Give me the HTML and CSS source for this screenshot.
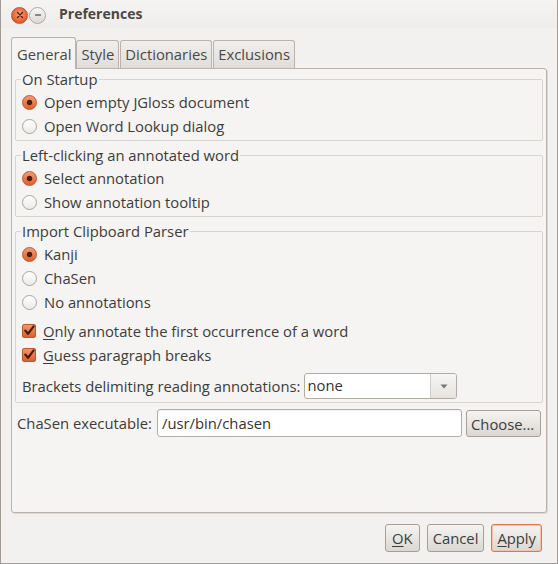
FILE: index.html
```html
<!DOCTYPE html>
<html>
<head>
<meta charset="utf-8">
<title>Preferences</title>
<link rel="stylesheet" href="styles.css">
</head>
<body>
<div class="window">
  <div class="titlebar">
    <span class="wbtn close"><svg width="8" height="8" viewBox="0 0 8 8"><path d="M1.5 1.5 L6.5 6.5 M6.5 1.5 L1.5 6.5" stroke="#5a2410" stroke-width="1.4" stroke-linecap="round"/></svg></span>
    <span class="wbtn min"><svg width="8" height="8" viewBox="0 0 8 8"><path d="M1.5 4 H6.5" stroke="#6a6662" stroke-width="1.3" stroke-linecap="round"/></svg></span>
    <span class="title">Preferences</span>
  </div>
  <div class="main">
    <div class="tabs">
      <div class="tab active">General</div>
      <div class="tab">Style</div>
      <div class="tab">Dictionaries</div>
      <div class="tab">Exclusions</div>
    </div>
    <div class="panel">
      <fieldset class="group">
        <legend>On Startup</legend>
        <div class="opts">
          <div class="opt"><span class="radio on"></span>Open empty JGloss document</div>
          <div class="opt"><span class="radio"></span>Open Word Lookup dialog</div>
        </div>
      </fieldset>
      <fieldset class="group">
        <legend>Left-clicking an annotated word</legend>
        <div class="opts">
          <div class="opt"><span class="radio on"></span>Select annotation</div>
          <div class="opt"><span class="radio"></span>Show annotation tooltip</div>
        </div>
      </fieldset>
      <fieldset class="group last">
        <legend>Import Clipboard Parser</legend>
        <div class="opts">
          <div class="opt"><span class="radio on"></span>Kanji</div>
          <div class="opt"><span class="radio"></span>ChaSen</div>
          <div class="opt"><span class="radio"></span>No annotations</div>
        </div>
        <div class="opts checks">
          <div class="opt"><span class="check"><svg width="14" height="14" viewBox="0 0 14 14"><path d="M3.5 6.5 L6.5 10 L12.5 2" fill="none" stroke="#3f1d0e" stroke-width="2.3" stroke-linecap="round" stroke-linejoin="round"/></svg></span><span><u>O</u>nly annotate the first occurrence of a word</span></div>
          <div class="opt"><span class="check"><svg width="14" height="14" viewBox="0 0 14 14"><path d="M3.5 6.5 L6.5 10 L12.5 2" fill="none" stroke="#3f1d0e" stroke-width="2.3" stroke-linecap="round" stroke-linejoin="round"/></svg></span><span><u>G</u>uess paragraph breaks</span></div>
        </div>
        <div class="combo-row">
          <span>Brackets delimiting reading annotations:</span>
          <div class="combo">
            <span class="combo-text">none</span>
            <span class="combo-arrow"><svg width="8" height="5" viewBox="0 0 8 5"><path d="M0.5 0.5 H7.5 L4 4.5 Z" fill="#7a7672"/></svg></span>
          </div>
        </div>
      </fieldset>
      <div class="exec-row">
        <span>ChaSen executable:</span>
        <div class="textfield">/usr/bin/chasen</div>
        <div class="btn choose">Choose...</div>
      </div>
    </div>
    <div class="buttons">
      <div class="btn ok"><u>O</u>K</div>
      <div class="btn cancel">Cancel</div>
      <div class="btn apply"><u>A</u>pply</div>
    </div>
  </div>
</div>
</body>
</html>
```
FILE: styles.css
```css
* { box-sizing: border-box; }
html, body { margin: 0; padding: 0; }
body {
  width: 558px;
  height: 564px;
  overflow: hidden;
  background: #f2f1f0;
  font-family: "Open Sans", "Noto Sans", sans-serif;
  font-size: 14.8px;
  color: #3c3c3c;
}
.window {
  width: 558px;
  height: 564px;
  border: 1px solid #a39c95;
  border-top: none;
  background: #f2f1f0;
  display: flex;
  flex-direction: column;
}
.titlebar {
  height: 28px;
  flex: none;
  display: flex;
  align-items: center;
  padding-left: 10px;
  padding-top: 2px;
  background: linear-gradient(#f5f4f2, #efedeb);
}
.wbtn {
  width: 17px;
  height: 17px;
  border-radius: 50%;
  display: flex;
  align-items: center;
  justify-content: center;
}
.wbtn.close {
  background: radial-gradient(circle at 50% 40%, #f7a47c, #e4592a 70%);
  border: 1px solid #c5532a;
}
.wbtn.min {
  margin-left: 1px;
  background: linear-gradient(#f7f6f5, #dcd8d4);
  border: 1px solid #b0aaa4;
}
.title {
  margin-left: 13px;
  margin-top: -3px;
  font-weight: bold;
  font-size: 14px;
  color: #4a4845;
}
.main {
  flex: 1;
  display: flex;
  flex-direction: column;
  padding-left: 10px;
}
.tabs {
  margin-top: 9px;
  height: 31px;
  display: flex;
  align-items: flex-end;
}
.tab {
  height: 28px;
  padding: 1px 4px 0 4px;
  margin-right: 1px;
  border: 1px solid #bab3ab;
  border-bottom: none;
  border-radius: 3px 3px 0 0;
  background: linear-gradient(#f1efed, #e0ddd9);
  line-height: 25px;
  color: #4a4845;
}
.tab.active {
  height: 32px;
  margin-bottom: -1px;
  margin-right: 0;
  padding: 0 4px 0 5px;
  line-height: 32px;
  background: #f5f4f2;
  position: relative;
  z-index: 1;
}
.panel {
  width: 536px;
  height: 445px;
  border: 1px solid #bab3ab;
  border-radius: 0 3px 3px 3px;
  background: #f5f4f2;
  padding: 1px 3px 0 3px;
  display: flex;
  flex-direction: column;
  box-shadow: 1px 1px 0 #dcd8d3;
}
.group {
  margin: 0;
  border: 1px solid #d8d4cf;
  border-radius: 2px;
  padding: 0 5px 2px 5px;
  min-inline-size: 0;
}
.group + .group { margin-top: 5px; }
.group.last { padding-bottom: 3px; }
legend {
  padding: 0 1px;
  line-height: 18px;
  height: 18px;
}
.opts { padding-top: 2px; }
.opts.checks { padding-top: 5px; }
.opt {
  height: 24px;
  display: flex;
  align-items: center;
  white-space: nowrap;
}
.radio {
  flex: none;
  width: 15px;
  height: 15px;
  margin: 0 7px 0 1px;
  border-radius: 50%;
  border: 1px solid #aaa49e;
  background: linear-gradient(#ffffff, #eceae7);
}
.radio.on {
  border-color: #b9592f;
  background:
    radial-gradient(circle, #4a2112 0, #4a2112 2.3px, rgba(74,33,18,0) 3.2px),
    linear-gradient(#f59b71, #df5f2b);
}
.check {
  flex: none;
  width: 14px;
  height: 14px;
  margin: 0 7px 0 1px;
  border-radius: 2px;
  border: 1px solid #b9592f;
  background: linear-gradient(#f39468, #dd5f2c);
  display: flex;
}
.check svg { margin: -1px 0 0 -1px; }
u { text-decoration: underline; text-underline-offset: 2px; text-decoration-thickness: 1px; }
.combo-row {
  margin-top: 6px;
  height: 26px;
  display: flex;
  align-items: center;
  padding-left: 1px;
  white-space: nowrap;
}
.combo {
  margin-left: 4px;
  width: 153px;
  height: 26px;
  display: flex;
  border: 1px solid #b3aca4;
  border-radius: 3px;
  background: #fff;
  overflow: hidden;
}
.combo-text {
  flex: 1;
  padding-left: 2px;
  line-height: 23px;
  color: #333;
}
.combo-arrow {
  width: 26px;
  border-left: 1px solid #d2cdc8;
  background: linear-gradient(#f7f6f5, #e6e3df);
  display: flex;
  align-items: center;
  justify-content: center;
}
.exec-row {
  margin-top: 6px;
  height: 28px;
  display: flex;
  align-items: center;
  padding: 0 2px;
  white-space: nowrap;
}
.textfield {
  margin-left: 5px;
  flex: 1;
  height: 28px;
  border: 1px solid #b3aca4;
  border-radius: 3px;
  background: #fff;
  padding-left: 4px;
  line-height: 26px;
  color: #333;
  box-shadow: inset 0 1px 1px rgba(0,0,0,0.06);
}
.btn {
  height: 28px;
  border: 1px solid #a7a099;
  border-radius: 3px;
  background: linear-gradient(#f5f4f2, #dbd7d2);
  line-height: 26px;
  padding: 0 5px;
  color: #3c3c3c;
  white-space: nowrap;
}
.choose {
  margin-left: 4px;
  height: 27px;
  width: 75px;
  flex: none;
  padding: 0 4px;
}
.buttons {
  margin-top: 11px;
  display: flex;
  justify-content: flex-end;
  gap: 7px;
  padding-right: 15px;
}
.btn.ok { padding: 0 6px; }
.btn.apply {
  border-color: #e2764a;
  box-shadow: inset 0 0 0 1px #f6c2a8;
}
```
